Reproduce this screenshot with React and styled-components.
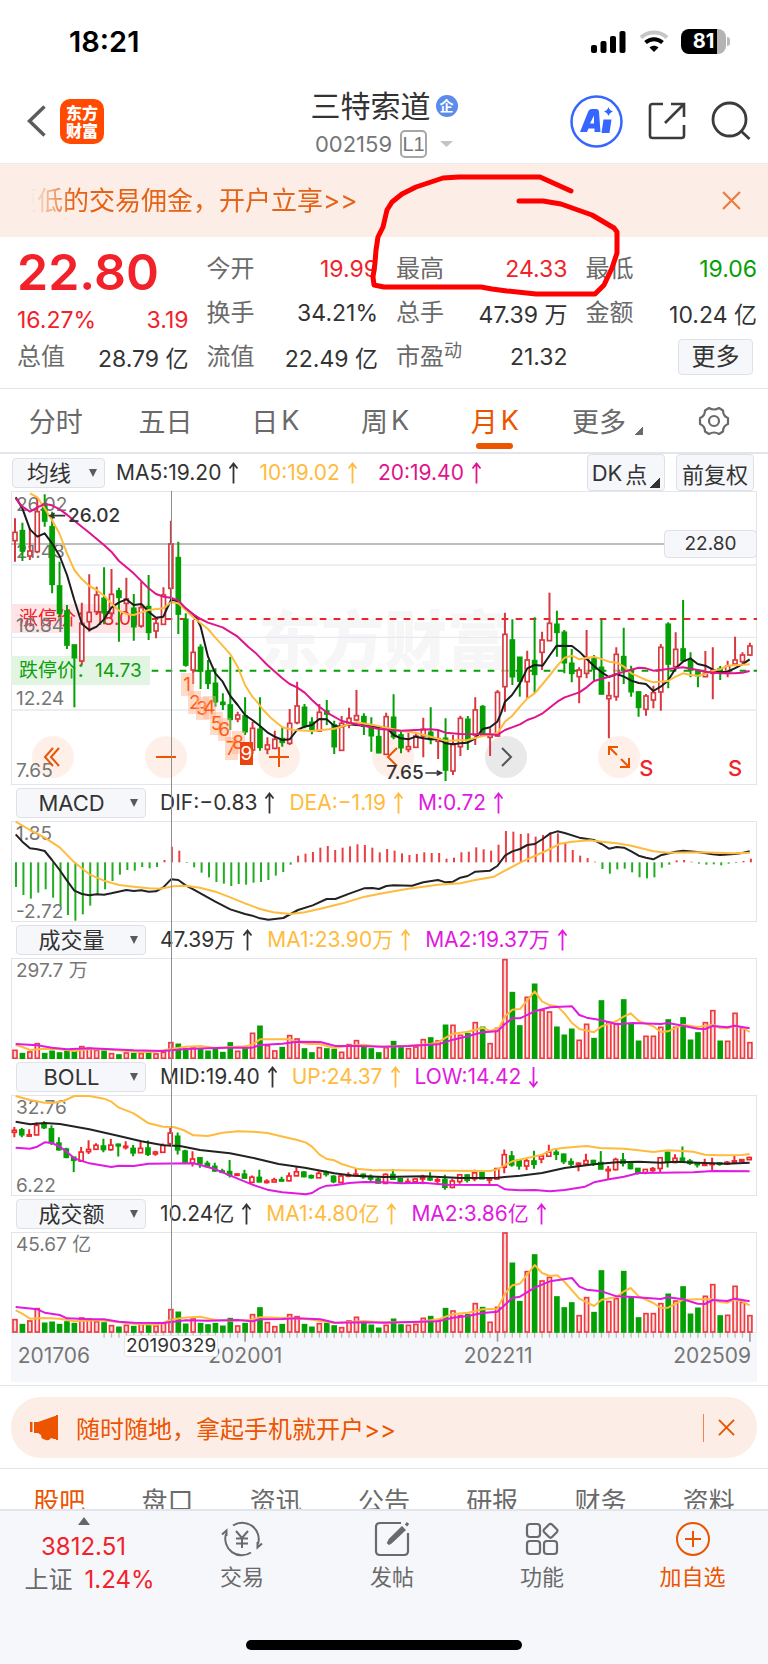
import React from 'react';
import styled, { createGlobalStyle, css } from 'styled-components';

const c = {
  red: '#f2222a',
  candleRed: '#d8393f',
  barRed: '#ee3a40',
  green: '#04a004',
  orange: '#ec5400',
  yellow: '#ffbb3d',
  magenta: '#e0148c',
  violet: '#e01ae0',
  ink: '#333',
  grey: '#6a6a6a',
  soft: '#767676',
  line: '#e4e5ea',
  panel: '#f6f7fa',
  peach: '#fceee6',
};

const Global = createGlobalStyle`
  * { box-sizing: border-box; }
  body {
    margin: 0;
    background: #fff;
    color: ${c.ink};
    font-family: Inter, "Noto Sans CJK SC", sans-serif;
    font-size: 22px;
  }
  button, select {
    margin: 0; padding: 0; border: 0; background: none;
    font: inherit; color: inherit; cursor: pointer;
  }
  svg { display: block; }
`;

/* ---------- chart data: 100 months, in plot units (3 per pixel) ---------- */

const X0 = 45;
const STEP = 22.27;
const xAt = (i) => X0 + STEP * i;

/* direction, body top, body bottom, high, low */
const candles = `r 157 182 115 245;g 152 213 128 243;r 213 228 145 240;r 95 215 55 220;g 72 123 43 140;
g 140 313 95 340;g 318 400 245 412;g 393 495 375 507;g 495 533 495 682;r 430 543 368 555;
r 397 425 283 455;r 345 395 320 405;g 355 398 262 433;r 343 400 267 415;g 333 352 323 485;
r 357 370 293 398;g 385 440 342 482;r 383 438 305 443;g 380 457 285 480;r 430 453 412 475;
r 345 433 322 435;r 192 325 122 360;g 233 402 185 462;g 418 555 400 560;r 517 570 420 612;
g 502 573 493 627;g 573 610 540 627;g 610 665 565 680;g 667 673 640 690;g 675 718 530 750;
r 705 717 695 727;g 708 755 652 765;r 745 810 725 822;g 748 802 652 812;r 795 808 772 823;
r 778 805 752 808;g 776 787 740 800;r 730 790 687 795;r 678 728 605 733;g 682 737 672 745;
g 727 750 712 763;r 697 753 672 755;g 693 702 660 735;g 735 800 722 822;r 730 811 708 813;
r 715 730 683 745;r 707 720 630 722;g 710 738 700 765;g 738 767 712 815;g 770 818 745 820;
r 710 823 698 825;g 712 770 643 778;g 765 803 755 820;r 800 808 758 817;r 768 802 760 803;
r 748 768 713 832;g 757 778 682 793;r 776 784 752 837;g 775 870 715 903;r 793 873 765 885;
r 715 800 707 828;g 718 782 708 810;r 690 765 652 795;g 680 765 675 768;r 764 772 745 828;
r 637 768 630 770;r 463 620 398 695;g 480 590 418 615;g 532 603 532 650;r 540 605 512 655;
g 542 583 412 640;r 480 517 455 570;r 430 482 338 482;g 433 457 392 530;g 457 548 450 580;
g 550 580 507 607;r 570 590 562 670;r 537 580 450 595;g 537 567 525 605;g 562 642 418 642;
r 647 656 605 775;r 523 650 502 662;g 530 570 443 612;g 570 635 557 650;g 636 682 634 710;
r 648 688 642 707;r 638 660 617 685;r 502 636 492 692;g 433 552 427 625;r 508 560 457 570;
g 507 542 360 545;g 542 570 517 592;g 572 587 568 622;r 580 590 513 590;r 571 580 502 658;
g 566 573 558 600;r 558 580 542 592;r 540 552 470 553;r 525 545 517 550;r 498 525 488 527`
  .split(';')
  .map((row) => {
    const [dir, top, bottom, high, low] = row.trim().split(' ');
    return { up: dir === 'r', top: +top, bottom: +bottom, high: +high, low: +low };
  });

const macd = [
  321, 345, 356, 338, 328, 353, 378, 405, 422, 403, 377, 343, 328, 303, 284, 270, 272, 261, 265, 261,
  240, 200, 212, 249, 262, 278, 292, 306, 311, 318, 312, 314, 308, 306, 300, 287, 276, 254, 227, 221,
  216, 203, 198, 210, 203, 199, 193, 195, 203, 217, 207, 212, 220, 225, 222, 217, 219, 219, 236, 233,
  217, 215, 202, 208, 212, 194, 153, 155, 162, 160, 170, 165, 157, 160, 188, 210, 227, 234, 245, 267,
  281, 268, 266, 277, 292, 295, 292, 263, 254, 241, 240, 245, 251, 254, 253, 256, 251, 249, 243, 236,
];

const volume = [
  810, 820, 815, 790, 820, 813, 818, 812, 814, 799, 804, 810, 813, 820, 824, 818, 820, 820, 817, 821,
  816, 787, 792, 806, 803, 808, 813, 808, 817, 788, 813, 806, 759, 738, 796, 812, 802, 766, 776, 806,
  818, 802, 806, 808, 816, 793, 781, 797, 806, 818, 802, 784, 803, 805, 800, 778, 773, 782, 735, 735,
  765, 760, 727, 741, 790, 744, 538, 637, 737, 651, 612, 690, 695, 741, 765, 747, 780, 732, 775, 662,
  726, 730, 659, 732, 783, 768, 768, 741, 719, 741, 713, 780, 758, 727, 691, 783, 783, 699, 744, 787,
];

const amount = [
  721, 736, 725, 688, 732, 729, 736, 728, 733, 716, 719, 727, 731, 739, 744, 738, 742, 735, 737, 740,
  732, 691, 699, 735, 719, 733, 737, 733, 741, 718, 740, 733, 706, 686, 730, 742, 736, 706, 712, 736,
  744, 733, 733, 740, 745, 725, 714, 732, 738, 747, 738, 720, 737, 738, 735, 717, 712, 722, 688, 695,
  709, 706, 673, 685, 729, 684, 461, 552, 667, 577, 527, 605, 594, 653, 686, 671, 709, 655, 700, 575,
  667, 658, 577, 655, 716, 703, 703, 673, 645, 665, 623, 705, 687, 651, 616, 710, 708, 621, 669, 709,
];

const lines = {
  ma5: '47,52 67,85 90,148 112,170 134,160 156,190 179,228 201,285 223,360 246,432 268,450 290,440 312,418 334,383 357,367 379,358 401,375 424,372 446,395 468,413 490,410 513,360 535,363 557,385 588,412 602,440 624,530 646,580 668,605 691,648 713,675 735,705 757,720 780,738 802,757 824,770 847,780 869,778 891,750 914,740 936,735 958,717 980,718 1003,738 1025,740 1047,733 1092,737 1137,742 1159,743 1181,765 1203,775 1225,778 1247,770 1270,775 1292,778 1314,777 1337,790 1359,793 1381,790 1403,788 1426,775 1448,747 1470,742 1492,725 1503,700 1515,665 1536,645 1560,610 1582,565 1604,555 1628,557 1650,525 1670,497 1716,498 1738,515 1760,537 1782,558 1805,577 1827,591 1850,582 1872,590 1894,602 1916,609 1938,612 1960,633 1982,620 2004,602 2027,565 2049,545 2071,535 2093,552 2116,557 2138,568 2160,577 2182,575 2204,565 2227,553 2249,538',
  ma10: '90,40 112,52 134,85 156,120 179,162 201,220 223,270 246,298 268,318 290,330 312,347 334,370 357,392 379,402 401,405 424,397 446,390 490,385 513,367 535,370 557,390 580,412 602,430 624,447 646,473 668,497 691,523 713,560 735,615 757,650 768,662 790,690 814,715 847,742 880,750 936,753 1003,746 1047,733 1070,727 1120,735 1159,743 1203,752 1247,758 1292,770 1337,782 1403,780 1448,768 1492,760 1515,725 1536,708 1560,680 1582,655 1604,640 1628,612 1650,585 1672,557 1694,533 1716,527 1738,538 1782,530 1827,545 1850,548 1872,560 1894,580 1916,590 1938,600 1960,607 2004,603 2027,590 2049,580 2071,585 2093,587 2116,582 2138,572 2160,568 2182,557 2249,553',
  ma20: '47,55 67,80 90,95 112,82 134,72 156,76 179,88 201,104 223,122 268,158 312,195 334,215 357,243 401,280 446,325 468,342 490,350 513,353 535,362 557,385 580,403 602,417 624,428 668,442 713,470 746,502 768,520 802,555 847,595 869,612 891,622 914,638 936,660 958,680 980,697 1025,723 1070,733 1137,747 1203,752 1292,748 1314,750 1337,758 1381,762 1470,763 1492,765 1515,750 1536,742 1560,733 1582,720 1604,712 1628,700 1672,665 1694,652 1738,637 1760,622 1782,603 1827,590 1872,575 1916,563 1938,565 1960,572 2004,567 2049,562 2093,570 2116,575 2160,580 2204,580 2227,578 2249,573',
  dif: '47,163 67,185 90,205 112,208 134,213 156,240 179,270 201,302 223,332 246,342 268,346 290,343 312,344 334,340 379,330 401,333 424,331 446,335 468,334 490,322 513,298 535,300 557,316 580,328 646,365 691,388 735,402 757,407 780,415 805,419 850,414 894,390 938,376 980,357 1006,357 1050,340 1092,325 1117,324 1137,327 1159,318 1181,316 1236,317 1270,307 1314,300 1337,307 1359,305 1381,293 1403,288 1426,275 1470,272 1492,258 1515,227 1537,214 1560,207 1582,195 1604,192 1628,177 1650,161 1672,154 1694,159 1738,173 1782,180 1805,192 1827,206 1850,201 1872,203 1894,214 1916,227 1938,233 1960,238 1982,226 2027,215 2049,212 2093,216 2138,223 2160,225 2204,222 2227,219 2249,214',
  dea: '47,125 90,150 134,173 179,202 223,247 268,283 312,302 357,315 401,320 446,325 480,326 520,319 557,317 600,323 646,335 691,352 735,370 780,387 820,397 870,402 914,397 961,386 1028,370 1094,350 1152,339 1225,326 1314,314 1381,310 1426,300 1482,290 1515,272 1560,248 1604,228 1650,207 1680,191 1716,185 1770,181 1805,185 1850,190 1894,197 1960,214 2004,218 2100,217 2200,220 2249,218',
  vol1: '47,796 67,802 90,811 134,807 179,809 223,814 268,808 312,809 379,814 424,818 468,816 490,812 513,808 557,801 602,799 646,805 691,802 735,800 757,795 780,779 869,779 892,787 925,793 958,793 1003,805 1047,798 1092,795 1137,801 1225,798 1292,793 1314,788 1337,774 1359,762 1403,756 1448,744 1470,754 1497,745 1515,710 1537,690 1560,688 1582,662 1604,635 1626,665 1650,677 1672,680 1694,702 1716,730 1738,748 1782,758 1805,740 1850,724 1872,710 1892,701 1916,724 1960,740 1982,757 2004,755 2049,735 2093,742 2138,735 2160,745 2182,746 2204,738 2227,744 2249,757',
  vol2: '47,793 112,797 156,804 201,809 268,806 334,809 401,812 490,814 557,808 624,806 680,804 757,804 780,796 847,792 892,786 961,787 1006,799 1072,799 1152,801 1225,799 1314,794 1359,780 1403,770 1448,758 1492,755 1515,733 1537,716 1560,716 1604,695 1650,683 1716,680 1738,706 1760,714 1805,722 1850,734 1900,730 1982,733 2004,730 2049,738 2093,747 2115,748 2138,739 2182,743 2204,738 2249,746',
  up: '47,50 90,62 134,70 156,71 190,65 223,50 268,50 312,58 334,67 357,85 401,102 446,132 490,142 520,143 550,152 580,168 624,170 668,160 713,156 757,157 802,161 840,170 892,182 918,190 936,202 958,225 980,239 1003,243 1025,254 1070,268 1120,273 1200,273 1350,274 1470,275 1492,270 1515,257 1537,246 1582,236 1626,226 1660,210 1694,205 1760,200 1800,206 1872,208 1916,213 1960,218 2004,213 2049,215 2080,217 2115,226 2160,228 2227,227 2249,224',
  mid: '47,127 90,135 134,131 180,134 268,150 357,170 424,186 490,198 540,200 600,212 690,222 770,238 836,254 914,265 1003,282 1060,289 1152,293 1270,291 1337,294 1382,296 1492,295 1560,289 1626,281 1694,266 1782,255 1850,249 1916,247 1982,250 2027,247 2093,250 2180,253 2249,250',
  low: '47,205 90,208 112,202 134,189 156,191 179,202 201,218 223,237 268,252 334,263 357,259 401,260 446,253 580,252 602,257 646,270 713,298 757,316 802,331 847,339 918,345 936,341 958,327 980,319 1003,318 1047,311 1092,308 1152,309 1205,312 1270,310 1340,316 1492,317 1515,330 1560,333 1604,332 1650,336 1694,332 1755,322 1782,309 1827,300 1872,292 1916,281 1982,280 2080,279 2138,275 2249,276',
  amt1: '47,695 67,705 90,720 134,718 179,720 223,728 290,725 334,728 401,735 468,738 490,732 513,723 550,717 600,714 646,724 700,726 750,724 780,716 869,718 925,722 1003,733 1092,727 1137,731 1250,731 1314,722 1359,706 1404,702 1448,692 1492,690 1515,645 1537,620 1560,615 1604,559 1626,583 1650,592 1672,590 1694,610 1738,660 1782,682 1805,663 1850,655 1872,638 1892,628 1916,653 1960,673 1982,688 2004,687 2049,663 2093,662 2138,662 2160,670 2182,672 2204,663 2227,668 2249,680',
  amt2: '47,685 112,692 134,702 179,709 201,719 268,722 312,722 357,729 401,732 490,733 557,725 624,726 713,724 757,728 780,722 847,721 892,719 961,722 1006,732 1092,731 1152,732 1314,728 1359,717 1403,712 1448,703 1492,699 1515,678 1537,658 1560,654 1604,627 1650,608 1716,598 1738,624 1760,633 1805,638 1850,653 1900,655 1982,661 2004,656 2049,662 2093,675 2115,676 2138,664 2182,667 2204,660 2249,668',
};

/* ---------- page ---------- */

const Page = styled.main`
  position: relative;
  min-width: 700px;
  overflow: hidden;
`;

const StatusBar = styled.div`
  height: 76px;
  padding: 7px 38px 0 69px;
  display: flex;
  align-items: center;
  justify-content: space-between;
  color: #000;
`;
const Clock = styled.time`
  font-size: 29px;
  font-weight: 600;
`;
const StatusIcons = styled.div`
  display: flex;
  align-items: center;
  gap: 12px;
`;
const Battery = styled.span`
  position: relative;
  width: 45px;
  height: 25px;
  margin-right: 4px;
  border-radius: 8px;
  background: linear-gradient(90deg, #000 81%, #b4b4b4 81%);
  color: #fff;
  font-size: 20px;
  line-height: 25px;
  font-weight: 700;
  text-align: center;
  &::after {
    content: '';
    position: absolute;
    right: -4px;
    top: 8px;
    width: 3px;
    height: 9px;
    border-radius: 0 3px 3px 0;
    background: #bbb;
  }
`;

const Header = styled.header`
  height: 88px;
  padding: 3px 17px 0;
  border-bottom: 1px solid #ececee;
  display: grid;
  grid-template-columns: 1fr auto 1fr;
  align-items: center;
`;
const HeaderSide = styled.div`
  display: flex;
  align-items: center;
  gap: ${(p) => p.$gap}px;
  padding-left: 10px;
  justify-content: ${(p) => (p.$end ? 'flex-end' : 'flex-start')};
`;
const IconButton = styled.button`
  display: flex;
  align-items: center;
  justify-content: center;
`;
const Logo = styled.span`
  width: 44px;
  height: 45px;
  border-radius: 10px;
  background: #ff4a00;
  color: #fff;
  font: 900 16px/18px "Noto Sans CJK SC", sans-serif;
  display: grid;
  place-content: center;
  text-align: center;
`;
const TitleBlock = styled.div`
  padding-top: 8px;
  display: flex;
  flex-direction: column;
  align-items: center;
`;
const TitleRow = styled.div`
  display: flex;
  align-items: center;
  gap: ${(p) => p.$gap}px;
  height: 38px;
`;
const Title = styled.h1`
  margin: 0;
  font-size: 30px;
  line-height: 38px;
  font-weight: 400;
`;
const CompanyBadge = styled.span`
  width: 22px;
  height: 22px;
  border-radius: 50%;
  background: #5b8cec;
  color: #fff;
  font-size: 14px;
  line-height: 22px;
  font-weight: 700;
  text-align: center;
`;
const Code = styled.span`
  font-size: 22px;
  color: ${c.soft};
`;
const Level = styled.span`
  width: 27px;
  height: 28px;
  border: 2px solid #a6a6a6;
  border-radius: 5px;
  color: ${c.soft};
  font: 20px/24px "Liberation Sans", sans-serif;
  text-align: center;
`;
const AiBadge = styled(IconButton)`
  width: 53px;
  height: 53px;
`;

const Banner = styled.div`
  height: 73px;
  padding: 0 27px;
  background: ${c.peach};
  color: #e46318;
  display: flex;
  align-items: center;
  justify-content: space-between;
`;
const Ticker = styled.a`
  overflow: hidden;
  color: inherit;
  text-decoration: none;
  font-size: 26px;
  line-height: 40px;
  white-space: nowrap;
  text-indent: -16px;
  mask-image: linear-gradient(90deg, transparent 4px, #000 46px);
`;

const Quote = styled.section`
  padding: 10px 11px 9px 17px;
  border-bottom: 1px solid ${c.line};
  display: grid;
  grid-template-columns: repeat(4, 1fr);
  grid-auto-rows: 44px;
  column-gap: 18px;
`;
const PriceCell = styled.div`
  grid-row: span 2;
  display: flex;
  flex-direction: column;
  justify-content: space-between;
  color: ${c.red};
`;
const Price = styled.strong`
  font-size: 50px;
  line-height: 50px;
  font-weight: 600;
`;
const Change = styled.div`
  display: flex;
  justify-content: space-between;
  font-size: 23px;
  line-height: 30px;
`;
const Fact = styled.div`
  display: flex;
  align-items: center;
  justify-content: space-between;
  white-space: nowrap;
`;
const FactLabel = styled.span`
  font-size: 24px;
  line-height: 32px;
  color: ${c.grey};
  sup {
    font-size: 18px;
    line-height: 18px;
    vertical-align: 8px;
  }
`;
const FactValue = styled.span`
  font-size: 23px;
  color: ${(p) => p.$color || c.ink};
`;
const boxed = css`
  border: 1px solid #dfe1e6;
  border-radius: 4px;
  background: ${c.panel};
`;
const MoreButton = styled.button`
  ${boxed}
  justify-self: end;
  align-self: center;
  width: 75px;
  height: 36px;
  margin-right: 4px;
  font-size: 24px;
  line-height: 32px;
`;

const Tabs = styled.nav`
  height: 65px;
  border-bottom: 2px solid ${c.line};
  display: grid;
  grid-template-columns: repeat(7, 1fr);
`;
const Tab = styled.button`
  position: relative;
  display: flex;
  align-items: center;
  justify-content: center;
  gap: 3px;
  padding-left: ${(p) => (p.$menu ? 8 : 2)}px;
  font-size: 27px;
  color: ${(p) => (p.$active ? c.orange : c.grey)};
  ${(p) => p.$active && css`
    &::after {
      content: '';
      position: absolute;
      left: 50%;
      bottom: 3px;
      width: 37px;
      height: 6px;
      margin-left: -18px;
      border-radius: 3px;
      background: ${c.orange};
    }
  `}
`;
const Corner = styled.i`
  width: ${(p) => p.$size}px;
  height: ${(p) => p.$size}px;
  align-self: flex-end;
  margin-left: ${(p) => p.$space || 0}px;
  margin-bottom: ${(p) => p.$lift}px;
  background: linear-gradient(135deg, transparent 50%, currentColor 50%);
`;

const ChartArea = styled.section`
  position: relative;
  margin: 0 11px;
`;
const LegendRow = styled.div`
  height: ${(p) => (p.$tall ? 37 : 36)}px;
  padding-left: ${(p) => (p.$tall ? 1 : 5)}px;
  padding-right: 3px;
  display: flex;
  align-items: center;
  gap: ${(p) => (p.$tall ? 11 : 14)}px;
`;
const Readings = styled.div`
  display: flex;
  align-items: center;
  gap: ${(p) => (p.$wide ? 20 : 14)}px;
`;
const Picker = styled.label`
  ${boxed}
  position: relative;
  width: ${(p) => (p.$narrow ? 93 : 130)}px;
  height: 30px;
  svg {
    position: absolute;
    right: 6px;
    top: 10px;
    pointer-events: none;
  }
`;
const PickerSelect = styled.select`
  appearance: none;
  width: 100%;
  height: 100%;
  padding-right: 19px;
  text-align: center;
  text-align-last: center;
  outline: 0;
`;
const Reading = styled.span`
  display: flex;
  align-items: center;
  gap: 7px;
  color: ${(p) => p.$color || c.ink};
  font-size: 21px;
  line-height: 30px;
  white-space: nowrap;
`;
const ModeButtons = styled.div`
  margin-left: auto;
  display: flex;
  align-self: stretch;
  gap: 11px;
`;
const ModeButton = styled.button`
  ${boxed}
  width: 78px;
  display: flex;
  align-items: center;
  justify-content: center;
  gap: 3px;
  white-space: nowrap;
`;

const Frame = styled.div`
  position: relative;
  height: ${(p) => p.$height}px;
  box-shadow: inset 0 0 0 1px ${c.line};
  svg.plot {
    position: relative;
    width: 100%;
    height: 100%;
  }
`;
const Mark = styled.span`
  position: absolute;
  left: ${(p) => p.$left};
  top: ${(p) => p.$top}px;
  font-size: ${(p) => p.$size || 19}px;
  line-height: 24px;
  font-weight: ${(p) => p.$weight || 400};
  color: ${(p) => p.$color || c.soft};
  white-space: nowrap;
`;
const Watermark = styled.span`
  position: absolute;
  inset: 105px 0 auto;
  color: #f6f6f7;
  font: 900 63px/80px "Noto Sans CJK SC", sans-serif;
  text-align: center;
`;
const LimitTag = styled.span`
  position: absolute;
  left: 0;
  top: ${(p) => p.$top}px;
  width: 139px;
  height: 29px;
  padding-left: 8px;
  background: ${(p) => p.$bg};
  color: ${(p) => p.$color};
  font-size: 19px;
  line-height: 29px;
  white-space: nowrap;
`;
const CrossH = styled.i`
  position: absolute;
  left: 0;
  right: 0;
  top: 52px;
  height: 2px;
  background: #bdbdbd;
`;
const CrossV = styled.i`
  position: absolute;
  left: 21.4%;
  top: 37px;
  bottom: 49px;
  width: 1px;
  background: #8d8d8d;
`;
const PriceFlag = styled.span`
  ${boxed}
  position: absolute;
  right: 0;
  top: 39px;
  width: 93px;
  height: 28px;
  font-size: 19px;
  line-height: 26px;
  text-align: center;
`;
const Count = styled.span`
  position: absolute;
  left: ${(p) => p.$left}%;
  top: ${(p) => p.$top}px;
  width: 13px;
  margin-left: -6px;
  background: ${(p) => (p.$last ? '#ea4310' : 'rgba(255, 176, 138, 0.45)')};
  color: ${(p) => (p.$last ? '#fff' : '#ff5c14')};
  font-size: 19px;
  line-height: 23px;
  display: flex;
  justify-content: center;
`;
const Controls = styled.div`
  position: absolute;
  left: 21px;
  right: 117px;
  bottom: 7px;
  display: flex;
  justify-content: space-between;
`;
const RoundButton = styled.button`
  width: 42px;
  height: 42px;
  border-radius: 50%;
  background: ${(p) => (p.$grey ? 'rgba(218,218,218,.6)' : 'rgba(253,226,212,.5)')};
  color: ${(p) => (p.$grey ? '#555' : c.orange)};
  display: grid;
  place-items: center;
`;
const Axis = styled.div`
  position: relative;
  height: 49px;
  background: ${c.panel};
`;
const AxisLabel = styled.span`
  position: absolute;
  top: 8px;
  left: ${(p) => p.$left}%;
  font-size: 21px;
  line-height: 30px;
  color: ${c.soft};
  transform: translateX(${(p) => p.$shift || 0}%);
`;
const DateFlag = styled.span`
  position: absolute;
  left: 113px;
  top: 2px;
  height: 22px;
  padding: 0 1px;
  border: 1px solid #e6e6ea;
  border-radius: 3px;
  background: #fff;
  font-size: 19px;
  line-height: 20px;
`;

const AdWrap = styled.div`
  margin-top: 3px;
  padding: 11px 11px 10px;
  border-top: 1px solid ${c.line};
  border-bottom: 1px solid ${c.line};
`;
const Ad = styled.div`
  height: 61px;
  padding: 0 22px 0 18px;
  border-radius: 30px;
  background: ${c.peach};
  color: ${c.orange};
  display: flex;
  align-items: center;
`;
const AdLink = styled.a`
  margin-left: 17px;
  flex: 1;
  color: inherit;
  text-decoration: none;
  font-size: 24px;
`;
const AdClose = styled(IconButton)`
  height: 28px;
  padding-left: 14px;
  border-left: 1px solid #f0854d;
`;

const Sections = styled.nav`
  height: 40px;
  padding: 14px 5px 0;
  overflow: hidden;
  display: grid;
  grid-template-columns: repeat(7, 1fr);
`;
const SectionTab = styled.button`
  height: 38px;
  font-size: 26px;
  line-height: 38px;
  color: ${(p) => (p.$active ? c.orange : c.grey)};
`;

const Dock = styled.footer`
  border-top: 2px solid #e3e5ed;
  background: ${c.panel};
  padding-bottom: 14px;
`;
const DockRow = styled.div`
  height: 129px;
  display: grid;
  grid-template-columns: 167fr 150fr 150fr 150fr 151fr;
`;
const IndexItem = styled.button`
  display: flex;
  flex-direction: column;
  align-items: center;
  justify-content: flex-start;
  padding-top: 6px;
  font-size: 24px;
  line-height: 33px;
  color: ${c.red};
  white-space: nowrap;
  svg { margin-bottom: 5px; }
`;
const IndexRow = styled.span`
  padding-left: 12px;
  display: flex;
  gap: 12px;
`;
const IndexName = styled.span`
  color: ${c.grey};
`;
const DockItem = styled.button`
  display: flex;
  flex-direction: column;
  align-items: center;
  justify-content: flex-start;
  gap: 2px;
  padding-top: 9px;
  line-height: 34px;
  color: ${(p) => (p.$accent ? c.orange : c.grey)};
`;
const HomeBar = styled.div`
  width: 36%;
  height: 10px;
  margin: 0 auto;
  border-radius: 5px;
  background: #000;
`;
const Scribble = styled.svg`
  position: absolute;
  left: 0;
  top: 0;
  width: 100%;
  height: 300px;
  pointer-events: none;
`;

/* ---------- drawings ---------- */

const Cross = ({ size, color }) => (
  <svg width={size} height={size} viewBox="0 0 18 18" stroke={color} strokeWidth="2" fill="none">
    <path d="M1 1 17 17M17 1 1 17" />
  </svg>
);

const DownMark = () => (
  <svg width="10" height="8" viewBox="0 0 10 8" fill="#5a5a5a"><path d="M1 0h8L5 8z" /></svg>
);

const Trend = ({ down }) => (
  <svg
    width="11" height="22" viewBox="0 0 11 22" fill="none" stroke="currentColor" strokeWidth="1.800"
    role="img" aria-label={down ? '下降' : '上升'}
  >
    <path d={down ? 'M5.500 1V20M1.500 15.500 5.500 20.500 9.500 15.500' : 'M5.500 21.500V2M1.500 6.500 5.500 1.500 9.500 6.500'} />
  </svg>
);

const Line = ({ pts, color, width = 6 }) => (
  <polyline points={pts} fill="none" stroke={color} strokeWidth={width} strokeLinejoin="round" />
);

const Candles = ({ map = (v) => v, dx = 0, red, width = 12 }) => (
  <g>
    {candles.map((k, i) => {
      const x = xAt(i) + dx;
      const color = k.up ? red : c.green;
      const top = map(k.top);
      const h = Math.max(map(k.bottom) - top, 4);
      return (
        <g key={i} stroke={color} strokeWidth="6">
          <path d={`M${x} ${map(k.high)}V${top}M${x} ${top + h}V${map(k.low)}`} />
          <rect
            x={x - width / 2} y={top} width={width} height={h}
            strokeWidth="5" fill={k.up ? '#fff' : color} fillOpacity={k.up ? 0.6 : 1}
          />
        </g>
      );
    })}
  </g>
);

const Bars = ({ tops, base }) => (
  <g>
    {tops.map((top, i) => {
      const up = candles[i].up;
      return (
        <rect
          key={i} x={xAt(i) - 6} y={top + 2} width="12" height={base - top - 2}
          stroke={up ? c.barRed : c.green} strokeWidth="5" fill={up ? '#fbdcdc' : c.green}
        />
      );
    })}
  </g>
);

const Plot = ({ top, height, children }) => (
  <svg className="plot" viewBox={`33 ${top} 2238 ${height}`} preserveAspectRatio="none" aria-hidden="true">
    {children}
  </svg>
);

const Legend = ({ name, readings, narrow, children }) => (
  <LegendRow $tall={narrow}>
    <Picker $narrow={narrow}>
      <PickerSelect aria-label={name} defaultValue={name}>
        <option>{name}</option>
      </PickerSelect>
      <DownMark />
    </Picker>
    <Readings $wide={narrow}>
      {readings.map(([text, color, down]) => (
        <Reading key={text} $color={color}>{text}<Trend down={down} /></Reading>
      ))}
    </Readings>
    {children}
  </LegendRow>
);

const counts = [
  [560, 578], [583, 633], [605, 650], [627, 648], [648, 697], [671, 715], [692, 770], [713, 752], [738, 787],
];

const RoundIcon = ({ d, width = 2 }) => (
  <svg width="28" height="28" viewBox="0 0 28 28" fill="none" stroke="currentColor" strokeWidth={width}>
    <path d={d} />
  </svg>
);

const facts = [
  ['今开', '19.99', c.red],
  ['最高', '24.33', c.red],
  ['最低', '19.06', c.green],
  ['换手', '34.21%'],
  ['总手', '47.39 万'],
  ['金额', '10.24 亿'],
  ['总值', '28.79 亿'],
  ['流值', '22.49 亿'],
];

export default function App() {
  return (
    <Page>
      <Global />
      <StatusBar>
        <Clock>18:21</Clock>
        <StatusIcons>
          <svg width="36" height="22" viewBox="0 0 36 22">
            <rect x="0" y="14" width="6" height="8" rx="2" />
            <rect x="9.500" y="10" width="6" height="12" rx="2" />
            <rect x="19" y="5" width="6" height="17" rx="2" />
            <rect x="28.500" y="0" width="6" height="22" rx="2" />
          </svg>
          <svg width="30" height="23" viewBox="0 0 30 23" fill="none">
            <path d="M2 7.500C9 .8 21 .8 28 7.500" stroke="#c6c6c6" strokeWidth="4" />
            <path d="M6.500 12.500C11.500 8 18.500 8 23.500 12.500" stroke="#000" strokeWidth="4" />
            <path d="M10.500 17.500C13 15.200 17 15.200 19.500 17.500L15 22z" fill="#000" />
          </svg>
          <Battery>81</Battery>
        </StatusIcons>
      </StatusBar>

      <Header>
        <HeaderSide $gap={14}>
          <IconButton aria-label="返回">
            <svg width="19" height="32" viewBox="0 0 19 32" fill="none" stroke="#5c5c5c" strokeWidth="3.500">
              <path d="M17.500 1.500 2.500 16l15 14.500" />
            </svg>
          </IconButton>
          <Logo>东方<br />财富</Logo>
        </HeaderSide>
        <TitleBlock>
          <TitleRow $gap={5}>
            <Title>三特索道</Title>
            <CompanyBadge>企</CompanyBadge>
          </TitleRow>
          <TitleRow $gap={8}>
            <Code>002159</Code>
            <Level>L1</Level>
            <svg width="18" height="8" viewBox="0 0 18 8" fill="#c4c4c4"><path d="M5 1h13l-6.500 6z" /></svg>
          </TitleRow>
        </TitleBlock>
        <HeaderSide $gap={25} $end>
          <AiBadge aria-label="Ai">
            <svg width="53" height="53" viewBox="0 0 53 53" fill="#3566ff">
              <circle cx="26.500" cy="26.500" r="25" fill="none" stroke="#3566ff" strokeWidth="2.500" />
              <path fillRule="evenodd" d="M10 37 18 17Q19 14 22 14H26Q29 14 29 17L30.500 37H24.500V33.500H18.500L17 37zM20 28.500H24V20.500z" />
              <path d="M33.500 24.500H41.500L39.500 38H31.500z" />
              <path d="M38.500 12Q39.500 15.500 43 16.500Q39.500 17.500 38.500 21Q37.500 17.500 34 16.500Q37.500 15.500 38.500 12z" />
            </svg>
          </AiBadge>
          <IconButton aria-label="分享">
            <svg width="38" height="38" viewBox="0 0 38 38" fill="none" stroke="#3b3b3b" strokeWidth="2.600">
              <path d="M15 2H4.500Q2 2 2 4.500V33.500Q2 36 4.500 36H33.500Q36 36 36 33.500V23M23 2H36V15M36 2 17 21" />
            </svg>
          </IconButton>
          <IconButton aria-label="搜索">
            <svg width="40" height="40" viewBox="0 0 40 40" fill="none" stroke="#3b3b3b" strokeWidth="2.800">
              <circle cx="18.500" cy="18.500" r="16.500" />
              <path d="m30 30 8.500 8" />
            </svg>
          </IconButton>
        </HeaderSide>
      </Header>

      <Banner>
        <Ticker href="#open">更低的交易佣金，开户立享&gt;&gt;</Ticker>
        <IconButton aria-label="关闭"><Cross size={19} color="#ee7a3c" /></IconButton>
      </Banner>

      <Quote>
        <PriceCell>
          <Price>22.80</Price>
          <Change><span>16.27%</span><span>3.19</span></Change>
        </PriceCell>
        {facts.map(([label, value, color]) => (
          <Fact key={label}>
            <FactLabel>{label}</FactLabel>
            <FactValue $color={color}>{value}</FactValue>
          </Fact>
        ))}
        <Fact>
          <FactLabel>市盈<sup>动</sup></FactLabel>
          <FactValue>21.32</FactValue>
        </Fact>
        <MoreButton>更多</MoreButton>
      </Quote>

      <Tabs>
        <Tab>分时</Tab>
        <Tab>五日</Tab>
        <Tab><span>日</span><span>K</span></Tab>
        <Tab><span>周</span><span>K</span></Tab>
        <Tab $active><span>月</span><span>K</span></Tab>
        <Tab $menu>更多<Corner $size={8} $lift={17} $space={6} /></Tab>
        <Tab aria-label="设置">
          <svg width="32" height="30" viewBox="0 0 32 30" fill="none" stroke="#6a6a6a" strokeWidth="2.200" strokeLinejoin="round">
            <path d="M11 2Q16 5 21 2L25 4.500Q25 10 30 12V18Q25 20 25 25.500L21 28Q16 25 11 28L7 25.500Q7 20 2 18V12Q7 10 7 4.500z" />
            <circle cx="16" cy="15" r="5" />
          </svg>
        </Tab>
      </Tabs>

      <ChartArea>
        <Legend
          narrow
          name="均线"
          readings={[['MA5:19.20'], ['10:19.02', c.yellow], ['20:19.40', c.magenta]]}
        >
          <ModeButtons>
            <ModeButton><span>DK</span><span>点</span><Corner $size={10} $lift={2} /></ModeButton>
            <ModeButton>前复权</ModeButton>
          </ModeButtons>
        </Legend>
        <Frame $height={294}>
          <Watermark>东方财富</Watermark>
          <LimitTag $top={113} $bg="#fde4e6" $color={c.red}>涨停价：18.01</LimitTag>
          <LimitTag $top={165} $bg="#e2f4e2" $color="#0aa00a">跌停价：14.73</LimitTag>
          <Mark $left="5px" $top={2}>26.02</Mark>
          <Mark $left="5px" $top={49}>21.43</Mark>
          <Mark $left="5px" $top={123}>16.84</Mark>
          <Mark $left="5px" $top={196}>12.24</Mark>
          <CrossH />
          <Controls>
            <RoundButton aria-label="最早"><RoundIcon d="M14 5 6 14l8 9M20 5l-8 9 8 9" /></RoundButton>
            <RoundButton aria-label="缩小"><RoundIcon d="M4 14H24" /></RoundButton>
            <RoundButton aria-label="放大"><RoundIcon d="M4 14H24M14 4V24" /></RoundButton>
            <RoundButton aria-label="向左"><RoundIcon d="M18 5 9 14l9 9" /></RoundButton>
            <RoundButton aria-label="向右" $grey><RoundIcon d="m10 5 9 9-9 9" /></RoundButton>
            <RoundButton aria-label="全屏"><RoundIcon d="M4 12V4H13M4 4l8 8M16 16l8 8M15 24H24V15" /></RoundButton>
          </Controls>
          <Mark $left="5px" $top={268}>7.65</Mark>
          <Plot top={33} height={882}>
            <path d="M33 255H2271M33 472H2271M33 690H2271" stroke="#e6e9f1" strokeWidth="4" />
            <path d="M455 417H2271" stroke={c.red} strokeWidth="6" strokeDasharray="20 22" />
            <path d="M455 572H2271" stroke={c.green} strokeWidth="6" strokeDasharray="20 22" />
            <Candles red={c.candleRed} />
            <Line pts={lines.ma5} color="#1c1c1c" />
            <Line pts={lines.ma10} color={c.yellow} />
            <Line pts={lines.ma20} color={c.magenta} />
            <path d="M152 107H196M164 100 150 107 164 114" fill="none" stroke="#333" strokeWidth="5" />
            <path d="M1276 879H1322M1310 872 1324 879 1310 886" fill="none" stroke="#333" strokeWidth="5" />
          </Plot>
          {counts.map(([x, y], i) => (
            <Count key={x} $left={(x - 33) / 22.38} $top={Math.round((y - 33) / 3)} $last={i === 8}>{i + 1}</Count>
          ))}
          <Mark $left="57px" $top={13} $weight={500} $color="#333">26.02</Mark>
          <Mark $left="50.3%" $top={270} $weight={500} $color="#333">7.65</Mark>
          <Mark $left="84.200%" $top={265} $size={22} $weight={500} $color={c.red}>S</Mark>
          <Mark $left="96.100%" $top={265} $size={22} $weight={500} $color={c.red}>S</Mark>
          <PriceFlag>22.80</PriceFlag>
        </Frame>

        <Legend
          name="MACD"
          readings={[['DIF:−0.83'], ['DEA:−1.19', c.yellow], ['M:0.72', c.violet]]}
        />
        <Frame $height={101}>
          <Mark $left="5px" $top={1}>1.85</Mark>
          <Mark $left="5px" $top={79}>-2.72</Mark>
          <Plot top={123} height={303}>
            {macd.map((v, i) => (
              <path
                key={i} d={`M${xAt(i) + 3} 247V${v}`} strokeWidth="6"
                stroke={v < 247 ? '#ea4045' : '#22ae22'}
              />
            ))}
            <Line pts={lines.dif} color="#222" />
            <Line pts={lines.dea} color={c.yellow} />
          </Plot>
        </Frame>

        <Legend
          name="成交量"
          readings={[['47.39万'], ['MA1:23.90万', c.yellow], ['MA2:19.37万', c.violet]]}
        />
        <Frame $height={101}>
          <Mark $left="5px" $top={1}>297.7 万</Mark>
          <Plot top={535} height={303}>
            <Bars tops={volume} base={836} />
            <Line pts={lines.vol1} color={c.yellow} />
            <Line pts={lines.vol2} color={c.violet} />
          </Plot>
        </Frame>

        <Legend
          name="BOLL"
          readings={[['MID:19.40'], ['UP:24.37', c.yellow], ['LOW:14.42', c.violet, true]]}
        />
        <Frame $height={101}>
          <Mark $left="5px" $top={1}>32.76</Mark>
          <Mark $left="5px" $top={79}>6.22</Mark>
          <Plot top={47} height={303}>
            <Candles red="#f0282d" map={(v) => 115.3 + 0.2393 * v} dx={-2} />
            <Line pts={lines.mid} color="#222" />
            <Line pts={lines.up} color={c.yellow} />
            <Line pts={lines.low} color={c.violet} />
          </Plot>
        </Frame>

        <Legend
          name="成交额"
          readings={[['10.24亿'], ['MA1:4.80亿', c.yellow], ['MA2:3.86亿', c.violet]]}
        />
        <Frame $height={101}>
          <Mark $left="5px" $top={1}>45.67 亿</Mark>
          <Plot top={460} height={303}>
            <Bars tops={amount} base={760} />
            <Line pts={lines.amt1} color={c.yellow} />
            <Line pts={lines.amt2} color={c.violet} />
          </Plot>
        </Frame>

        <Axis>
          <svg width="100%" height="10" viewBox="33 762 2238 30" preserveAspectRatio="none">
            {candles.map((k, i) => {
              if (i < 12) return null;
              const major = i === 31 || i === 65 || i === 99;
              return (
                <path
                  key={i} d={`M${xAt(i)} 762V${major ? 788 : 776}`}
                  stroke={major ? '#999' : '#bbb'} strokeWidth={major ? 5 : 4}
                />
              );
            })}
          </svg>
          <AxisLabel $left={0.9}>201706</AxisLabel>
          <AxisLabel $left={31.4} $shift={-50}>202001</AxisLabel>
          <AxisLabel $left={65.3} $shift={-50}>202211</AxisLabel>
          <AxisLabel $left={99.2} $shift={-100}>202509</AxisLabel>
          <DateFlag>20190329</DateFlag>
        </Axis>
        <CrossV />
      </ChartArea>

      <AdWrap>
        <Ad>
          <svg width="30" height="28" viewBox="0 0 30 28" fill={c.orange}>
            <path d="M1 8h2.500v10H1zM5 8h4L26 2h1V1h2v25h-2v-1h-2l-3-1q-2 3-5 2l-3-1q-2-1-2-4l-3-2H5z" />
          </svg>
          <AdLink href="#account">随时随地，拿起手机就开户&gt;&gt;</AdLink>
          <AdClose aria-label="关闭"><Cross size={17} color={c.orange} /></AdClose>
        </Ad>
      </AdWrap>

      <Sections>
        {['股吧', '盘口', '资讯', '公告', '研报', '财务', '资料'].map((t, i) => (
          <SectionTab key={t} $active={i === 0}>{t}</SectionTab>
        ))}
      </Sections>

      <Dock>
        <DockRow>
          <IndexItem>
            <svg width="14" height="8" viewBox="0 0 14 8" fill="#666"><path d="M7 0 13 8H1z" /></svg>
            <span>3812.51</span>
            <IndexRow><IndexName>上证</IndexName><span>1.24%</span></IndexRow>
          </IndexItem>
          <DockItem>
            <svg width="42" height="38" viewBox="0 0 42 38" fill="none" stroke="#6a6a6a" strokeWidth="2">
              <path d="M12 5.500A16.500 16.500 0 0 1 37 24M30 32.500A16.500 16.500 0 0 1 5 14" />
              <path d="M1 14.500 5.500 10.500V16M41 23.500 36.500 27.500V22" />
              <path d="m15 11 6 7 6-7M21 18V28M15 18.500H27M15 23.500H27" />
            </svg>
            交易
          </DockItem>
          <DockItem>
            <svg width="36" height="38" viewBox="0 0 36 38" fill="none" stroke="#6a6a6a" strokeWidth="2.200">
              <path d="M27 3H6Q2 3 2 7V31Q2 35 6 35H30Q34 35 34 31V13" />
              <path d="m14 24 2-4L29 7M14 24l3-2L31 9M32 5.500l2-2.500" strokeWidth="3" />
            </svg>
            发帖
          </DockItem>
          <DockItem>
            <svg width="34" height="38" viewBox="0 0 34 38" fill="none" stroke="#6a6a6a" strokeWidth="2.200">
              <rect x="2" y="4" width="13" height="13" rx="3" />
              <rect x="2" y="21" width="13" height="13" rx="3" />
              <rect x="19" y="21" width="13" height="13" rx="3" />
              <path d="M24 4.500Q25.500 3 27 4.500L32 9.500Q33 10.500 32 12L27 17Q25.500 18.500 24 17L19 12Q18 10.500 19 9.500z" />
            </svg>
            功能
          </DockItem>
          <DockItem $accent>
            <svg width="38" height="38" viewBox="0 0 38 38" fill="none" stroke={c.orange} strokeWidth="2">
              <circle cx="19" cy="19" r="16" />
              <path d="M11 19H27M19 11V27" />
            </svg>
            加自选
          </DockItem>
        </DockRow>
        <HomeBar />
      </Dock>

      <Scribble viewBox="0 0 768 300" preserveAspectRatio="none" aria-hidden="true">
        <path
          d="M571 191 540 177H459L443 178 431 182 416 187 402 194 392 202 387 210 383 227 378 237 376 250 375 263 373 277 374 285 384 287H481L492 289 507 291 536 294H595L604 285 612 268 617 253V232L614 228 592 215 561 204 549 202 543 201H519"
          fill="none" stroke="#ff0000" strokeWidth="5" strokeLinecap="round" strokeLinejoin="round"
        />
      </Scribble>
    </Page>
  );
}
